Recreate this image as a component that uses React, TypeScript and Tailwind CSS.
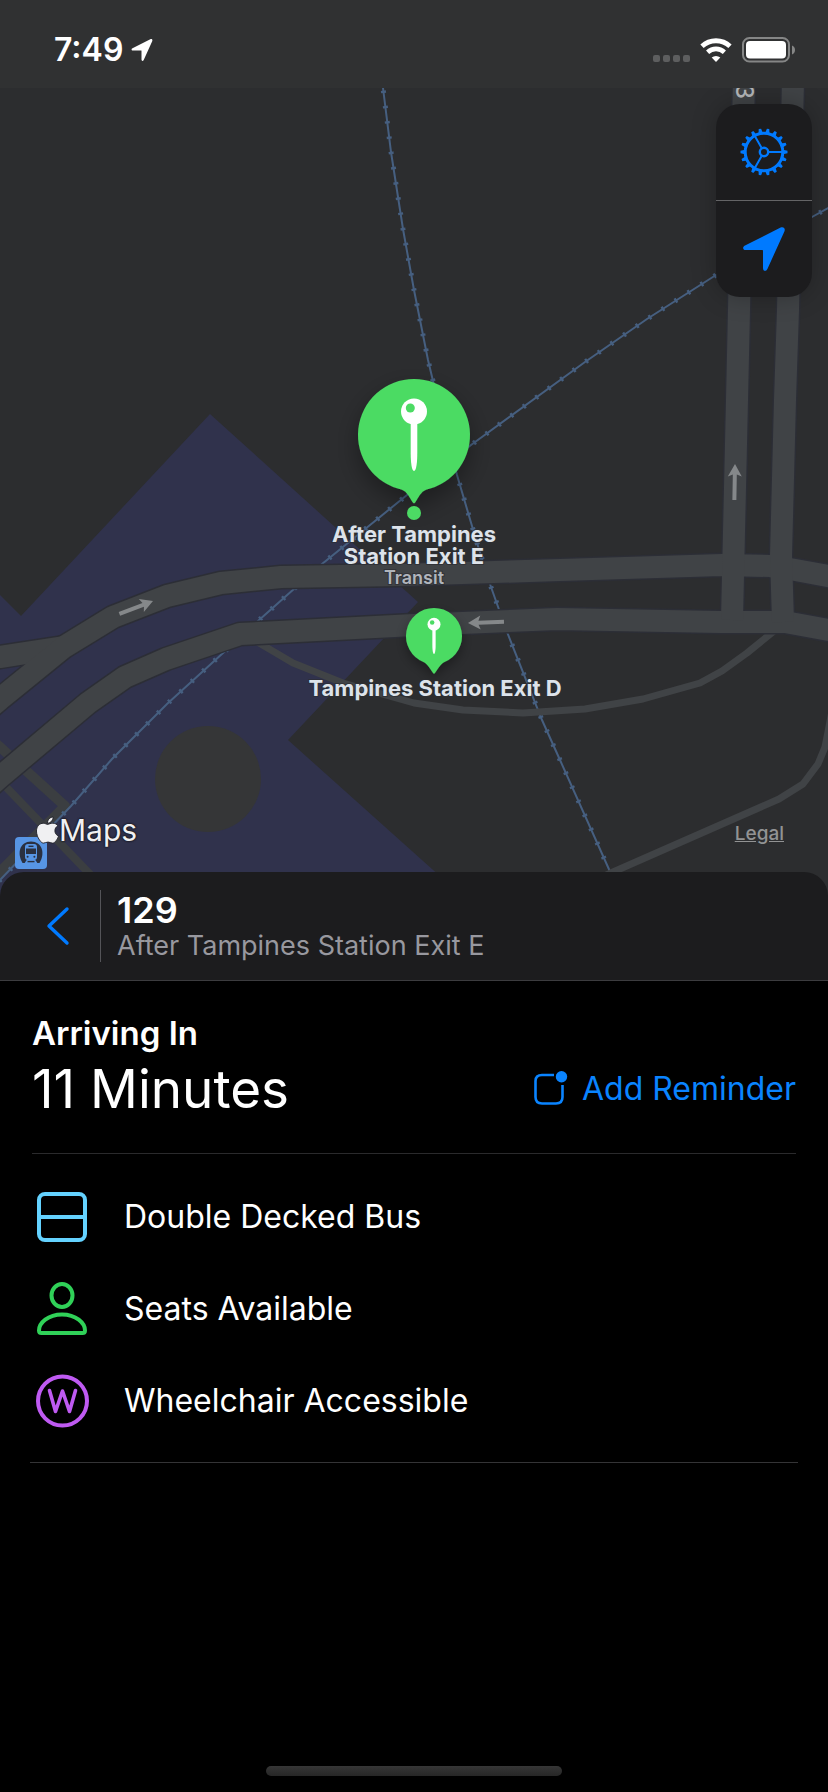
import React from "react";
import { FaApple } from "react-icons/fa";

const RAIL_NORTH =
  "M380 60 L383 88 L391 152 L403 229 L414 290 L428 360 L433 381 L457 475 L477 543 L491 587 L507 632 L542 720 L560 760 L612 876 L630 916";
const RAIL_EAST =
  "M848 196 L828 208 L812 217 L716 275 L647 319 L585 362 L471 445 L407 495 L375 521 L322 564 L258 621 L223 653 L167 704 L112 759 L71 806 L0 880 L-20 902";

const LocationArrow = ({ className }: { className: string }) => (
  <svg viewBox="0 0 42 44" className={className} fill="currentColor" aria-hidden="true">
    <path d="M37.6 0.6 L2 18.4 C-0.9 19.9 -0.2 23 2.6 23 L19 23 C19.7 23 20 23.3 20 24 L20 41 C20 44.3 23 44.9 24.4 42 L41.4 4.4 C42.7 1.4 40.4 -0.8 37.6 0.6 Z" />
  </svg>
);

const Rail = ({ d }: { d: string }) => (
  <g fill="none" stroke="#465f80">
    <path d={d} strokeWidth="2" />
    <path d={d} strokeWidth="5" strokeDasharray="2.4 13" />
  </g>
);

const RoadArrow = ({ x, y, angle }: { x: number; y: number; angle: number }) => (
  <path
    d="M0 0 L7 12.5 L2 10.5 L2 36 L-2 36 L-2 10.5 L-7 12.5 Z"
    fill="#85888a"
    transform={`translate(${x} ${y}) rotate(${angle})`}
  />
);

const LARGE_BALLOON =
  "M0 -56 A56 56 0 0 1 12 54.7 C7 56.5 4 63 1.5 67 Q0 69.5 -1.5 67 C-4 63 -7 56.5 -12 54.7 A56 56 0 0 1 0 -56 Z";
const SMALL_BALLOON =
  "M0 -56 A56 56 0 0 1 20 52.3 C12 57 6 68 2 74 Q0 77 -2 74 C-6 68 -12 57 -20 52.3 A56 56 0 0 1 0 -56 Z";

const Pin = ({ x, y, scale, balloon }: { x: number; y: number; scale: number; balloon: string }) => (
  <g transform={`translate(${x} ${y}) scale(${scale})`}>
    <g filter="url(#pin-shadow)">
      <path d={balloon} fill="#4cdb64" />
    </g>
    <circle cx="0" cy="-23.5" r="13" fill="#fff" />
    <circle cx="-3.7" cy="-27" r="4.5" fill="#4cdb64" />
    <path d="M-3.3 -13 H3.3 V18 C3.3 27 2.3 36 0 36 C-2.3 36 -3.3 27 -3.3 18 Z" fill="#fff" />
  </g>
);

const MapCanvas = () => (
  <svg
    viewBox="0 88 828 808"
    preserveAspectRatio="xMidYMid slice"
    className="block h-full w-full font-[Inter,sans-serif]"
    role="img"
    aria-label="Map around Tampines Station"
  >
    <defs>
      <filter id="pin-shadow" x="-50%" y="-50%" width="200%" height="200%">
        <feDropShadow dx="0" dy="10" stdDeviation="12" floodColor="#000" floodOpacity="0.35" />
      </filter>
    </defs>
    <rect x="-200" y="0" width="1300" height="1000" fill="#2c2d2f" />
    <path d="M210 414 L418 602 L288 740 L480 912 L-40 912 L-40 555 L21 616 Z" fill="#30324c" />
    <circle cx="208" cy="779" r="53" fill="#353637" />

    <g fill="none" stroke="#3b3e41" strokeLinejoin="round">
      <path d="M-12 736 L0 747 L65 806 L-20 892" strokeWidth="10" />
      <path d="M5 786 L110 895" strokeWidth="8" />
    </g>

    <Rail d={RAIL_NORTH} />
    <Rail d={RAIL_EAST} />

    <g fill="none" stroke="#404346" strokeWidth="7" strokeLinejoin="round">
      <path d="M254 640 L293 663 L343 683 L414 703 L463 710 L523 713 L585 709 L643 699 L700 683 L722 671 L747 653 L774 631" />
      <path d="M836 690 L828 732 L825 747 L818 764 L803 784 L779 799 L613 872 L570 892" />
    </g>

    <g fill="none" strokeLinejoin="round">
      <g stroke="#2c2e36" strokeWidth="25">
        <path d="M-20 660 L0 657 L64 647" />
        <path d="M-20 716 L0 699 L64 647 L113 617 L167 596 L221 583 L281 577 L400 575 L560 570 L722 565 L770 566 L790 569 L850 580" />
        <path d="M-20 795 L0 777 L88 703 L125 677 L166 659 L240 634 L414 625 L557 619 L720 622 L785 622 L850 634" />
        <path d="M744 80 L739 310 L737 400 L732 620" />
        <path d="M793 80 L788 310 L785 400 L781 556 L783 622" />
      </g>
      <g stroke="#404346" strokeWidth="22">
        <path d="M-20 660 L0 657 L64 647" />
        <path d="M-20 716 L0 699 L64 647 L113 617 L167 596 L221 583 L281 577 L400 575 L560 570 L722 565 L770 566 L790 569 L850 580" />
        <path d="M-20 795 L0 777 L88 703 L125 677 L166 659 L240 634 L414 625 L557 619 L720 622 L785 622 L850 634" />
        <path d="M744 80 L739 310 L737 400 L732 620" />
        <path d="M793 80 L788 310 L785 400 L781 556 L783 622" />
      </g>
    </g>

    <RoadArrow x={153} y={601} angle={69} />
    <RoadArrow x={468} y={623} angle={-92} />
    <RoadArrow x={735} y={464} angle={1} />
    <text transform="translate(736 99) rotate(90)" textAnchor="end" fontSize="24" fontWeight="500" fill="#b4b6b8">
      3
    </text>

    <Pin x={414} y={435} scale={1} balloon={LARGE_BALLOON} />
    <circle cx="414" cy="513" r="7" fill="#4cdb64" />
    <Pin x={434} y={636} scale={0.5} balloon={SMALL_BALLOON} />

    <g
      textAnchor="middle"
      fill="#dde3ea"
      fontSize="22"
      fontWeight="700"
      stroke="#2c2d33"
      strokeWidth="2"
      strokeOpacity="0.7"
      paintOrder="stroke"
    >
      <text x="414" y="542">After Tampines</text>
      <text x="414" y="564">Station Exit E</text>
      <text x="414" y="584" fontSize="18" fontWeight="600" fill="#b0b5bc">
        Transit
      </text>
      <text x="435" y="696">Tampines Station Exit D</text>
    </g>

    <g transform="translate(15 837)">
      <rect width="32" height="32" rx="4" fill="#5795e4" />
      <path d="M7.5 26 C1.5 16 5 4.5 16 4.5 C27 4.5 30.5 16 24.5 26 Z" fill="#2a3040" />
      <rect x="10" y="7" width="12" height="16" rx="3" fill="#5795e4" />
      <rect x="11" y="11.5" width="10" height="5.5" fill="#2a3040" />
      <rect x="13.5" y="8.6" width="5" height="1.4" fill="#2a3040" />
      <circle cx="12.6" cy="19.8" r="1" fill="#2a3040" />
      <circle cx="19.4" cy="19.8" r="1" fill="#2a3040" />
      <path d="M12 22.5 L9 27 H23 L20 22.5 Z" fill="#5795e4" />
      <path d="M12.5 24.6 H19.5" stroke="#2a3040" strokeWidth="1.4" />
    </g>
  </svg>
);

const TEETH = Array.from({ length: 18 }, (_, i) => i * 20 + 10);

const GearIcon = () => (
  <svg viewBox="-24 -24 48 48" className="size-12" aria-hidden="true" fill="none" stroke="currentColor">
    <circle r="18.8" strokeWidth="3" />
    <circle r="4.2" strokeWidth="2.4" />
    <path d="M5 0 H19 M-2.5 -4.3 L-9.5 -16.5 M-2.5 4.3 L-9.5 16.5" strokeWidth="2" />
    {TEETH.map((a) => (
      <path key={a} d="M-1.2 -23.5 H1.2 L2.2 -19 H-2.2 Z" fill="currentColor" stroke="none" transform={`rotate(${a})`} />
    ))}
  </svg>
);

const BusIcon = () => (
  <svg viewBox="0 0 54 54" className="size-[54px] text-[#64d2ff]" fill="none" stroke="currentColor" strokeWidth="4" aria-hidden="true">
    <rect x="3" y="4" width="46" height="46" rx="6" />
    <path d="M3 27 H49" />
  </svg>
);

const PersonIcon = () => (
  <svg viewBox="0 0 54 54" className="size-[54px] text-[#30d158]" fill="none" stroke="currentColor" strokeWidth="4" aria-hidden="true">
    <ellipse cx="26" cy="13.5" rx="10.5" ry="11.5" />
    <path d="M5.5 51 C3.5 51 3 49.8 3 48.5 C3 41 12 32.5 26 32.5 C40 32.5 49 41 49 48.5 C49 49.8 48.5 51 46.5 51 Z" />
  </svg>
);

const WheelchairIcon = () => (
  <svg viewBox="0 0 54 54" className="size-[54px] text-[#bf5af2]" fill="none" stroke="currentColor" strokeWidth="4" aria-hidden="true">
    <circle cx="26.5" cy="27" r="24.5" />
    <path d="M13.5 16.5 L19.5 37.5 L26.5 17 L33.5 37.5 L39.5 16.5" strokeLinecap="round" strokeLinejoin="round" strokeWidth="3.6" />
  </svg>
);

const FEATURES = [
  { label: "Double Decked Bus", Icon: BusIcon },
  { label: "Seats Available", Icon: PersonIcon },
  { label: "Wheelchair Accessible", Icon: WheelchairIcon },
];

const StatusBar = () => (
  <header className="flex h-[88px] shrink-0 items-start justify-between bg-[#303132] pt-8 pr-8 pl-[54px] text-white">
    <div className="flex items-center gap-2">
      <time className="text-[32px] leading-9 font-semibold">7:49</time>
      <LocationArrow className="size-[22px]" />
    </div>
    <div className="flex h-9 items-center gap-2.5">
      <div className="flex gap-[3px] pt-4">
        {[0, 1, 2, 3].map((n) => (
          <span key={n} className="size-[7px] rounded-[2px] bg-[#5d5e5f]" />
        ))}
      </div>
      <svg viewBox="0 0 32 24" className="h-6 w-8" fill="none" stroke="#fff" aria-label="Wi-Fi" role="img">
        <path d="M2 8.3 A20.5 20.5 0 0 1 30 8.3" strokeWidth="4.8" />
        <path d="M7.6 14.2 A12.4 12.4 0 0 1 24.4 14.2" strokeWidth="4.6" />
        <path d="M16 24 L11.7 19.6 A6.3 6.3 0 0 1 20.3 19.6 Z" fill="#fff" stroke="none" />
      </svg>
      <svg viewBox="0 0 54 26" className="h-[26px] w-[54px]" aria-label="Battery" role="img">
        <rect x="1" y="1" width="46" height="23.5" rx="6.5" fill="none" stroke="#858686" strokeWidth="2" />
        <rect x="4" y="4" width="40" height="17.5" rx="4" fill="#fff" />
        <path d="M50 8.5 C54 10 54 16 50 17.5 Z" fill="#858686" />
      </svg>
    </div>
  </header>
);

export default function App() {
  return (
    <div className="flex min-h-screen flex-col bg-black font-[Inter,sans-serif] text-white">
      <StatusBar />

      <section className="relative h-[808px] shrink-0 overflow-hidden bg-[#2c2d2f]">
        <MapCanvas />
        <div className="absolute top-4 right-4 flex w-24 flex-col overflow-hidden rounded-3xl bg-[#1c1c1e] text-[#007aff] shadow-[0_0_24px_rgba(0,0,0,0.25)]">
          <button type="button" aria-label="Settings" className="flex h-24 items-center justify-center">
            <GearIcon />
          </button>
          <button
            type="button"
            aria-label="Show my location"
            className="flex h-[97px] items-center justify-center border-t border-[#646466]"
          >
            <LocationArrow className="h-11 w-[42px]" />
          </button>
        </div>
        <div className="absolute bottom-12 left-9 flex items-center text-[#f0f0f2]">
          <FaApple className="h-[30px] w-[23px] overflow-visible stroke-[#22232b] stroke-[16]" aria-hidden="true" />
          <span className="text-[30px] leading-9 [text-shadow:0_0_2px_#111,0_0_2px_#111]">Maps</span>
        </div>
        <a href="#legal" className="absolute right-11 bottom-12 text-[19px] leading-7 font-medium text-[#929394] underline">
          Legal
        </a>
      </section>

      <main className="relative -mt-6 flex grow flex-col">
        <div className="flex h-[109px] items-center rounded-t-3xl border-b border-[#3c3c3f] bg-[#1c1c1e]">
          <button type="button" aria-label="Back" className="flex h-full w-[100px] items-center justify-center pl-4 text-[#007aff]">
            <svg viewBox="0 0 24 40" className="h-10 w-6" fill="none" stroke="currentColor" strokeWidth="3.4" strokeLinecap="round" strokeLinejoin="round" aria-hidden="true">
              <path d="M21 3 L3 20 L21 37" />
            </svg>
          </button>
          <div className="flex h-[72px] flex-col justify-center border-l border-[#545458] pl-4">
            <h1 className="text-[36px] leading-10 font-semibold">129</h1>
            <p className="text-[27px] leading-8 text-[#98989f]">After Tampines Station Exit E</p>
          </div>
        </div>

        <div className="mx-8 flex items-end justify-between border-b border-[#2a2a2c] pt-8 pb-7">
          <div>
            <h2 className="text-[33px] leading-10 font-semibold">Arriving In</h2>
            <p className="text-[53px] leading-[72px]">11 Minutes</p>
          </div>
          <button type="button" className="flex items-center gap-3.5 pb-4 text-[32px] leading-10 text-[#0a84ff]">
            <svg viewBox="0 0 34 36" className="h-9 w-[34px]" fill="none" stroke="currentColor" strokeWidth="2.6" aria-hidden="true">
              <path d="M20 4 H8 Q1.5 4 1.5 10 V26 Q1.5 32.5 8 32.5 H22 Q28.5 32.5 28.5 26 V14" />
              <circle cx="27.5" cy="5.7" r="5.7" fill="currentColor" stroke="none" />
            </svg>
            Add Reminder
          </button>
        </div>

        <ul className="mx-[30px] flex flex-col border-b border-[#343436] pt-[17px] pb-[15px]">
          {FEATURES.map(({ label, Icon }) => (
            <li key={label} className="flex h-[92px] items-center gap-[34px] pl-1.5 text-[32px]">
              <Icon />
              {label}
            </li>
          ))}
        </ul>

        <div className="mx-auto mt-auto mb-4 h-2.5 w-[296px] rounded-full bg-linear-to-b from-[#363636] to-[#262626]" />
      </main>
    </div>
  );
}
